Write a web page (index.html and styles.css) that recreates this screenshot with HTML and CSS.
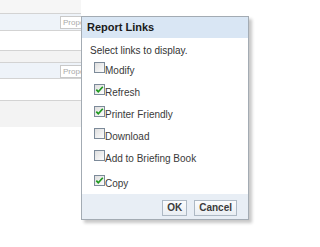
FILE: index.html
```html
<!DOCTYPE html>
<html>
<head>
<meta charset="utf-8">
<link rel="stylesheet" href="styles.css">
</head>
<body>
<div class="page">
  <div class="panel">
    <div class="band top"></div>
    <div class="band hdr"><span class="prop">Properties</span></div>
    <div class="band content c1"></div>
    <div class="band sep"></div>
    <div class="band hdr h2"><span class="prop">Properties</span></div>
    <div class="band content c2"></div>
    <div class="band sep s2"></div>
  </div>

  <div class="dialog">
    <div class="dlg-head">Report Links</div>
    <div class="dlg-body">
      <div class="intro">Select links to display.</div>
      <div class="opts">
        <div class="opt"><svg class="cb" width="11" height="11" viewBox="0 0 11 11"><rect x="0.5" y="0.5" width="10" height="10" fill="url(#g)" stroke="#7c8a99"/></svg><span>Modify</span></div>
        <div class="opt"><svg class="cb" width="11" height="11" viewBox="0 0 11 11"><rect x="0.5" y="0.5" width="10" height="10" fill="url(#g)" stroke="#7c8a99"/><path d="M2.3 5.6 L4.3 7.8 L8.8 2.8" fill="none" stroke="#1f9a1f" stroke-width="1.7"/></svg><span>Refresh</span></div>
        <div class="opt"><svg class="cb" width="11" height="11" viewBox="0 0 11 11"><rect x="0.5" y="0.5" width="10" height="10" fill="url(#g)" stroke="#7c8a99"/><path d="M2.3 5.6 L4.3 7.8 L8.8 2.8" fill="none" stroke="#1f9a1f" stroke-width="1.7"/></svg><span>Printer Friendly</span></div>
        <div class="opt"><svg class="cb" width="11" height="11" viewBox="0 0 11 11"><rect x="0.5" y="0.5" width="10" height="10" fill="url(#g)" stroke="#7c8a99"/></svg><span>Download</span></div>
        <div class="opt"><svg class="cb" width="11" height="11" viewBox="0 0 11 11"><rect x="0.5" y="0.5" width="10" height="10" fill="url(#g)" stroke="#7c8a99"/></svg><span>Add to Briefing Book</span></div>
        <div class="opt last"><svg class="cb" width="11" height="11" viewBox="0 0 11 11"><rect x="0.5" y="0.5" width="10" height="10" fill="url(#g)" stroke="#7c8a99"/><path d="M2.3 5.6 L4.3 7.8 L8.8 2.8" fill="none" stroke="#1f9a1f" stroke-width="1.7"/></svg><span>Copy</span></div>
      </div>
    </div>
    <div class="dlg-foot">
      <button class="btn ok">OK</button>
      <button class="btn">Cancel</button>
    </div>
  </div>

  <svg width="0" height="0" class="defs">
    <defs>
      <linearGradient id="g" x1="0" y1="0" x2="1" y2="1">
        <stop offset="0" stop-color="#dcdcdc"/>
        <stop offset="1" stop-color="#ffffff"/>
      </linearGradient>
    </defs>
  </svg>
</div>
</body>
</html>
```

FILE: styles.css
```css
html, body {
  margin: 0;
  padding: 0;
  background: #ffffff;
  font-family: "Liberation Sans", Arial, sans-serif;
}

.page {
  position: relative;
  width: 320px;
  height: 247px;
  overflow: hidden;
}

.defs {
  position: absolute;
}

.panel {
  width: 81px;
  overflow: hidden;
}

.band {
  border-bottom: 1px solid #d3d3d3;
  box-sizing: content-box;
}

.top {
  height: 13px;
  background: #f6f6f6;
}

.hdr {
  height: 16px;
  background: #eef3f9;
  display: flex;
  justify-content: flex-end;
  align-items: flex-start;
}

.h2 {
  height: 15px;
}

.prop {
  width: 18px;
  height: 11px;
  margin-top: 2px;
  padding-left: 2px;
  border: 1px solid #c9c9c9;
  border-right: none;
  background: #ffffff;
  color: #a9a9a9;
  font-size: 8px;
  line-height: 11px;
  white-space: nowrap;
  overflow: hidden;
}

.content {
  background: #ffffff;
}

.c1 {
  height: 19px;
}

.c2 {
  height: 21px;
}

.sep {
  height: 11px;
  background: #f3f3f3;
}

.s2 {
  height: 26px;
  border-bottom: none;
}

.dialog {
  position: absolute;
  left: 81px;
  top: 16px;
  width: 166px;
  border: 1px solid #a3abb3;
  background: #ffffff;
  box-shadow: 3px 3px 3px rgba(0, 0, 0, 0.22);
}

.dlg-head {
  height: 21px;
  background: #d9e6f4;
  padding-left: 5px;
  font-size: 11px;
  font-weight: bold;
  color: #1a1a1a;
  line-height: 21px;
}

.dlg-body {
  padding: 7px 0 8px 8px;
}

.intro {
  font-size: 10px;
  line-height: 12px;
  color: #333333;
}

.opts {
  display: flex;
  flex-direction: column;
  gap: 11px;
  margin-top: 5px;
  padding-left: 4px;
}

.opt {
  display: flex;
  align-items: flex-start;
  height: 11px;
  font-size: 10px;
  line-height: 11px;
  color: #3a3a3a;
  white-space: nowrap;
}

.opt span {
  padding-top: 3px;
}

.opt.last {
  margin-top: 3px;
}

.cb {
  display: block;
  flex: none;
}

.dlg-foot {
  height: 25px;
  box-sizing: border-box;
  background: #e8eef5;
  display: flex;
  justify-content: flex-end;
  align-items: flex-start;
  gap: 7px;
  padding: 6px 11px 0 0;
}

.btn {
  height: 16px;
  margin: 0;
  padding: 0 4px;
  border: 1px solid #aeb9c4;
  background: linear-gradient(#fbfcfd, #e9eef3);
  font-family: "Liberation Sans", Arial, sans-serif;
  font-size: 10px;
  font-weight: bold;
  color: #3b3b3b;
  line-height: 14px;
}

.ok {
  width: 25px;
}
```
